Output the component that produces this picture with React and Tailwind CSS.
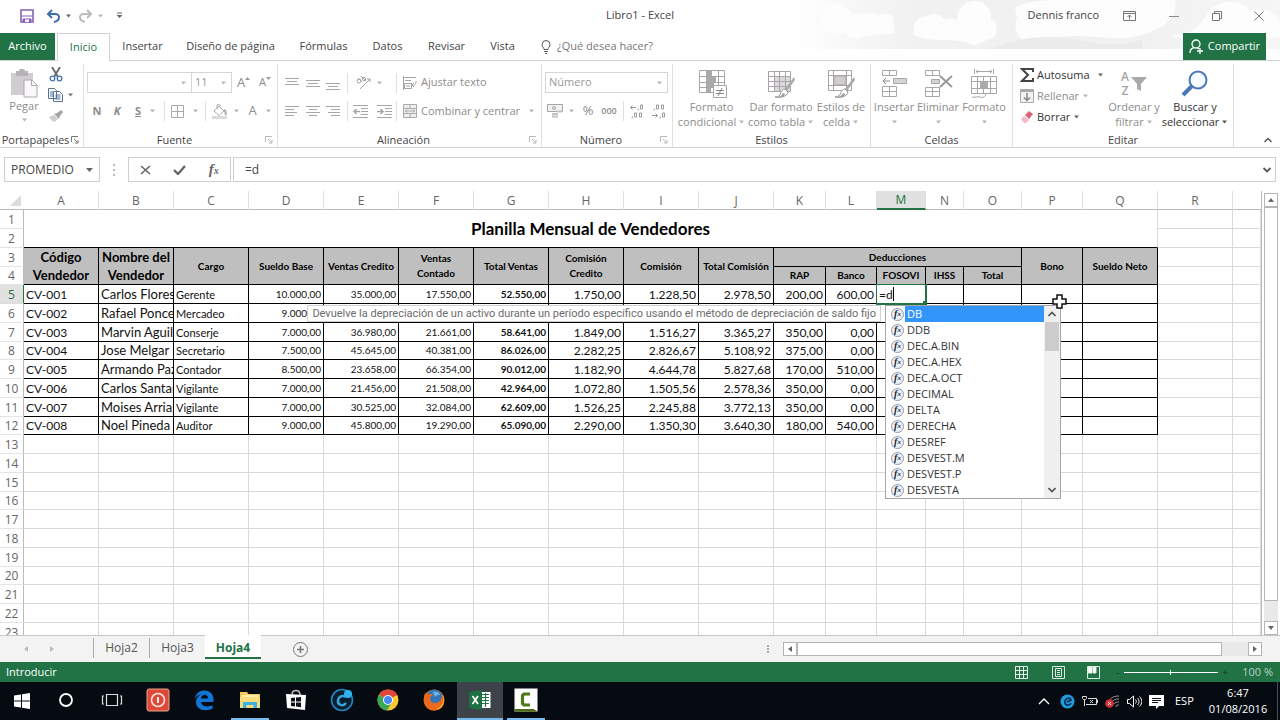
import { useState } from "react";

const COLUMNS = [
  { name: "A", width: "w-[75px]" },
  { name: "B", width: "w-[75px]" },
  { name: "C", width: "w-[75px]" },
  { name: "D", width: "w-[75px]" },
  { name: "E", width: "w-[75px]" },
  { name: "F", width: "w-[75px]" },
  { name: "G", width: "w-[75px]" },
  { name: "H", width: "w-[75px]" },
  { name: "I", width: "w-[75px]" },
  { name: "J", width: "w-[75px]" },
  { name: "K", width: "w-[52px]" },
  { name: "L", width: "w-[51px]" },
  { name: "M", width: "w-[49px]" },
  { name: "N", width: "w-[38px]" },
  { name: "O", width: "w-[58px]" },
  { name: "P", width: "w-[61px]" },
  { name: "Q", width: "w-[75px]" },
  { name: "R", width: "w-[75px]" },
];

const EMPLOYEES = [
  ["CV-001", "Carlos Flores", "Gerente", "10.000,00", "35.000,00", "17.550,00", "52.550,00", "1.750,00", "1.228,50", "2.978,50", "200,00", "600,00"],
  ["CV-002", "Rafael Ponce", "Mercadeo", "9.000,00", "", "", "", "", "", "", "", ""],
  ["CV-003", "Marvin Aguilar", "Conserje", "7.000,00", "36.980,00", "21.661,00", "58.641,00", "1.849,00", "1.516,27", "3.365,27", "350,00", "0,00"],
  ["CV-004", "Jose Melgar", "Secretario", "7.500,00", "45.645,00", "40.381,00", "86.026,00", "2.282,25", "2.826,67", "5.108,92", "375,00", "0,00"],
  ["CV-005", "Armando Paz", "Contador", "8.500,00", "23.658,00", "66.354,00", "90.012,00", "1.182,90", "4.644,78", "5.827,68", "170,00", "510,00"],
  ["CV-006", "Carlos Santana", "Vigilante", "7.000,00", "21.456,00", "21.508,00", "42.964,00", "1.072,80", "1.505,56", "2.578,36", "350,00", "0,00"],
  ["CV-007", "Moises Arriaga", "Vigilante", "7.000,00", "30.525,00", "32.084,00", "62.609,00", "1.526,25", "2.245,88", "3.772,13", "350,00", "0,00"],
  ["CV-008", "Noel Pineda", "Auditor", "9.000,00", "45.800,00", "19.290,00", "65.090,00", "2.290,00", "1.350,30", "3.640,30", "180,00", "540,00"],
];

const FUNCTIONS = [
  "DB", "DDB", "DEC.A.BIN", "DEC.A.HEX", "DEC.A.OCT", "DECIMAL",
  "DELTA", "DERECHA", "DESREF", "DESVEST.M", "DESVEST.P", "DESVESTA",
];

// Text style of each data column
const CELL_STYLES = [
  "pl-[2px] text-left text-[12px]",
  "pl-[2px] text-left text-[13px]",
  "pl-[2px] text-left text-[11px]",
  "pr-[2px] text-right text-[10px]",
  "pr-[2px] text-right text-[10px]",
  "pr-[2px] text-right text-[10px]",
  "pr-[2px] text-right text-[10px] font-bold",
  "pr-[2px] text-right text-[12px]",
  "pr-[2px] text-right text-[12px]",
  "pr-[2px] text-right text-[12px]",
  "pr-[2px] text-right text-[12px]",
  "pr-[2px] text-right text-[12px]",
];

/* ---------- small shared pieces ---------- */

function Caret({ className = "text-[#b5b5b5]" }) {
  return (
    <svg viewBox="0 0 7 4" className={`h-1 w-[7px] shrink-0 ${className}`} fill="currentColor">
      <path d="M1 0.5h5L3.5 3.5z" />
    </svg>
  );
}

function Launcher({ className = "text-[#b8b8b8]" }) {
  return (
    <svg viewBox="0 0 8 8" className={`h-2 w-2 ${className}`} fill="none" stroke="currentColor">
      <path d="M0.5 6V0.5H7M3 3l4 4M7 4v3H4" />
    </svg>
  );
}

function Group({ label, width, launcher, launcherColor, children }) {
  return (
    <section aria-label={label} className={`flex shrink-0 flex-col ${width}`}>
      <div className="flex min-h-0 flex-1 border-r border-[#e0e0e0]">{children}</div>
      <div className="flex h-[14px] items-center border-r border-[#e0e0e0] text-[#444]">
        <span className="flex-1 text-center leading-[14px]">{label}</span>
        {launcher && (
          <button type="button" aria-label={`Opciones de ${label}`} className="w-3">
            <Launcher className={launcherColor} />
          </button>
        )}
      </div>
    </section>
  );
}

function Divider() {
  return <span className="h-5 w-px shrink-0 bg-[#e0e0e0]" />;
}

function IconButton({ label, width = "w-5", className = "", children }) {
  return (
    <button type="button" aria-label={label} className={`flex h-5 shrink-0 items-center justify-center ${width} ${className}`}>
      {children}
    </button>
  );
}

function BigButton({ icon, lines, width, dark }) {
  return (
    <button type="button" className={`flex shrink-0 flex-col items-center ${width} ${dark ? "text-[#333]" : "text-[#8c8c8c]"}`}>
      <span className="flex h-[31px] items-center">{icon}</span>
      <span className="h-[15px] whitespace-nowrap leading-[15px]">{lines[0]}</span>
      <span className="flex h-[15px] items-center gap-[2px] whitespace-nowrap leading-[15px]">
        {lines[1]}
        <Caret className={dark ? "text-[#555]" : "text-[#b5b5b5]"} />
      </span>
    </button>
  );
}

function Lines({ rows }) {
  return (
    <svg viewBox="0 0 14 14" className="size-[14px]" stroke="#a8a8a8">
      {rows.map(([x1, x2, y]) => (
        <path key={y} d={`M${x1} ${y}H${x2}`} />
      ))}
    </svg>
  );
}

/* ---------- title bar and tabs ---------- */

function Clouds() {
  return (
    <svg viewBox="0 0 485 50" className="absolute right-0 top-0 h-[50px] w-[485px]" aria-hidden="true">
      <defs>
        <linearGradient id="sky" x1="0" x2="1" y1="0" y2="0">
          <stop offset="0" stopColor="#ffffff" />
          <stop offset="0.12" stopColor="#f7f7f7" />
          <stop offset="0.25" stopColor="#f1f1f1" />
          <stop offset="0.7" stopColor="#f1f1f1" />
          <stop offset="1" stopColor="#f6f6f6" />
        </linearGradient>
      </defs>
      <path d="M0 0H485V49H0z" fill="url(#sky)" />
      <g fill="#fdfdfd">
        <circle cx="41" cy="19" r="16" />
        <circle cx="61" cy="26" r="13" />
        <path d="M60 20c8-9 18-8 24-4 7-5 16-2 14 8 4 6 0 12-10 10-14 3-28 2-32-4z" />
        <path d="M119 35c-2-12 4-19 13-19 8-4 15-1 18 4 4-2 9-2 12 1 0-14 9-20 18-20s17 8 16 18c8 1 7 20-1 20-9 3-14 9-20 5-14-7-36 0-56-9z" />
        <path d="M220 8c10-7 28-8 50-8h110c4 16-10 30-38 36-18 5-38 0-60 0-20 0-36 5-52 5-12-6-10-18-8-24z" />
        <path d="M378 35c30 0 30-22 40-28 12-8 30-6 36 3 20-2 31 5 31 12v14c-30 8-80 10-107 0z" />
      </g>
      <path d="M195 49c34-13 58-15 92-8 22 5 42 4 60-1v9z" fill="#ebebeb" />
    </svg>
  );
}

function TitleBar() {
  return (
    <div className="relative flex h-[31px] items-center text-[11px] text-[#444]">
      <div className="flex flex-1 items-center">
        <button type="button" aria-label="Guardar" className="ml-5">
          <svg viewBox="0 0 14 14" className="size-[14px]">
            <path d="M1 1h12v12H1z" fill="#fff" stroke="#8560b5" strokeWidth="1.6" />
            <path d="M2 7h10M3 10h8v3H3z" fill="#8560b5" stroke="#8560b5" />
            <path d="M5 10.5h4V13H5z" fill="#fff" />
          </svg>
        </button>
        <button type="button" aria-label="Deshacer" className="ml-3 flex items-center gap-1">
          <svg viewBox="0 0 15 14" className="h-[14px] w-[15px]" fill="none" stroke="#3f6eae" strokeWidth="2">
            <path d="M6 1L2 5l4 4M2 5h7c6 0 5 7-1 8" />
          </svg>
          <Caret className="text-[#666]" />
        </button>
        <button type="button" aria-label="Rehacer" className="ml-[6px] flex items-center gap-1">
          <svg viewBox="0 0 15 14" className="h-[14px] w-[15px]" fill="none" stroke="#bbb" strokeWidth="2">
            <path d="M9 1l4 4-4 4M13 5H6c-6 0-5 7 1 8" />
          </svg>
          <Caret />
        </button>
        <button type="button" aria-label="Personalizar barra" className="ml-3">
          <svg viewBox="0 0 7 7" className="size-[7px]" fill="#666">
            <path d="M1 0.5h5v1H1zM0.500 3h6L3.500 6z" />
          </svg>
        </button>
      </div>
      <h1 className="text-center">Libro1 - Excel</h1>
      <div className="flex flex-1 items-center justify-end">
        <span className="mr-6">Dennis franco</span>
        <button type="button" aria-label="Opciones de presentación" className="mr-[33px]">
          <svg viewBox="0 0 13 10" className="h-[10px] w-[13px]" fill="none" stroke="#777">
            <path d="M0.500 0.500h12v9H0.500zM0.500 2.500h12M6.500 8.500V4M4.500 6l2-2 2 2" />
          </svg>
        </button>
        <button type="button" aria-label="Minimizar" className="mr-[33px]">
          <svg viewBox="0 0 10 10" className="size-[10px]" stroke="#888"><path d="M0 5.500h10" /></svg>
        </button>
        <button type="button" aria-label="Restaurar" className="mr-8">
          <svg viewBox="0 0 10 10" className="size-[10px]" fill="none" stroke="#777">
            <path d="M0.500 2.500h7v7h-7zM2.500 2.500v-2h7v7h-2" />
          </svg>
        </button>
        <button type="button" aria-label="Cerrar" className="mr-4">
          <svg viewBox="0 0 10 10" className="size-[10px]" stroke="#777"><path d="M0.500 0.500l9 9M9.500 0.500l-9 9" /></svg>
        </button>
      </div>
    </div>
  );
}

const TABS = [
  ["Insertar", "w-[65px]"],
  ["Diseño de página", "w-[111px]"],
  ["Fórmulas", "w-[75px]"],
  ["Datos", "w-[53px]"],
  ["Revisar", "w-[65px]"],
  ["Vista", "w-[47px]"],
];

function RibbonTabs() {
  return (
    <nav className="relative mt-[2px] flex h-7 border-b border-[#d2d2d2] text-[11px] text-[#444]">
      <button type="button" className="h-[27px] w-[55px] bg-[#217346] text-white">Archivo</button>
      <button type="button" className="-mb-px ml-[2px] h-7 w-[53px] border-x border-t border-[#d2d2d2] bg-white text-[#217346]">
        Inicio
      </button>
      {TABS.map(([name, width]) => (
        <button key={name} type="button" className={`h-[27px] whitespace-nowrap ${width}`}>
          {name}
        </button>
      ))}
      <button type="button" className="ml-[15px] flex items-center gap-[6px] whitespace-nowrap text-[#777]">
        <svg viewBox="0 0 10 14" className="h-[14px] w-[10px]" fill="none" stroke="#555">
          <path d="M3 9.500C3 7.500 1 7 1 4.500a4 4 0 0 1 8 0C9 7 7 7.500 7 9.500zM3 11.500h4M4 13.500h2" />
        </svg>
        ¿Qué desea hacer?
      </button>
      <button type="button" className="ml-auto mr-[14px] flex h-[27px] w-[83px] items-center justify-center gap-1 bg-[#217346] text-white">
        <svg viewBox="0 0 15 15" className="size-[15px]" fill="none" stroke="#fff" strokeWidth="1.3">
          <circle cx="7" cy="5" r="4" />
          <path d="M1 14c0-3 2-5 4.500-5.500M8 8.500l2 1.500M8 12h6M11 9v6" />
        </svg>
        Compartir
      </button>
    </nav>
  );
}

/* ---------- ribbon ---------- */

function Clipboard() {
  return (
    <Group label="Portapapeles" width="w-[84px]" launcher launcherColor="text-[#777]">
      <div className="flex w-12 flex-col items-center pt-1 text-[#8c8c8c]">
        <button type="button" className="flex flex-col items-center">
          <svg viewBox="0 0 28 30" className="h-[30px] w-7">
            <path d="M1 5h22v22H1z" fill="#cfcdcf" />
            <path d="M6 3h3c0-3 6-3 6 0h3v5H6z" fill="#b5b3b5" />
            <path d="M14 12h8l5 5v12H14z" fill="#fbf7fa" stroke="#aaa" />
            <path d="M21.500 12v5.500H27" fill="none" stroke="#aaa" />
          </svg>
          <span className="h-4 leading-4">Pegar</span>
          <span className="flex h-3 items-center"><Caret /></span>
        </button>
      </div>
      <div className="flex flex-col gap-px">
        <IconButton label="Cortar" width="w-4">
          <svg viewBox="0 0 14 15" className="h-[15px] w-[14px]" fill="none">
            <path d="M3 0l6 10M11 0L5 10" stroke="#666" strokeWidth="1.800" />
            <circle cx="3.500" cy="11.500" r="2.300" stroke="#4573b0" strokeWidth="1.300" />
            <circle cx="10.500" cy="11.500" r="2.300" stroke="#4573b0" strokeWidth="1.300" />
          </svg>
        </IconButton>
        <IconButton label="Copiar" width="w-[26px]" className="gap-1">
          <svg viewBox="0 0 15 14" className="h-[14px] w-[15px]" fill="#fff" stroke="#5b728f">
            <path d="M0.500 0.500h6l2 2v8h-8zM5.500 3.500h6l3 3v7h-9z" />
            <path d="M2 4h3M2 6h3M2 8h3M7.500 7h5M7.500 9h5M7.500 11h5" stroke="#4573b0" />
          </svg>
          <Caret className="text-[#777]" />
        </IconButton>
        <IconButton label="Copiar formato" width="w-4">
          <svg viewBox="0 0 14 12" className="h-3 w-[14px]">
            <path d="M0 7l5-2 4 4-4 3c-2-1-4-3-5-5z" fill="#d0ccd0" />
            <path d="M5 4l3-1 4-3 2 2-3 4-1 3z" fill="#a5a5a5" />
          </svg>
        </IconButton>
      </div>
    </Group>
  );
}

function SelectBox({ label, value, width }) {
  return (
    <div className={`flex h-[21px] items-center border border-[#d6d6d6] pr-1 ${width}`}>
      <select aria-label={label} defaultValue={value} className="min-w-0 flex-1 appearance-none pl-[3px] text-[#999] outline-none">
        <option>{value}</option>
      </select>
      <Caret />
    </div>
  );
}

function Font() {
  return (
    <Group label="Fuente" width="w-[194px]" launcher>
      <div className="flex flex-col gap-2 pl-[3px] pt-2 text-[#8c8c8c]">
        <div className="flex items-center">
          <SelectBox label="Fuente" value="" width="w-[105px]" />
          <SelectBox label="Tamaño de fuente" value="11" width="-ml-px w-[41px]" />
          <IconButton label="Aumentar tamaño" width="w-[23px]">
            <span className="text-[13px]">A</span>
            <svg viewBox="0 0 5 3" className="mb-2 h-[3px] w-[5px]" fill="#999"><path d="M0 3h5L2.500 0z" /></svg>
          </IconButton>
          <IconButton label="Disminuir tamaño" width="w-5">
            <span>A</span>
            <svg viewBox="0 0 5 3" className="mb-2 h-[3px] w-[5px]" fill="#999"><path d="M0 0h5L2.500 3z" /></svg>
          </IconButton>
        </div>
        <div className="flex items-center">
          <IconButton label="Negrita"><b>N</b></IconButton>
          <IconButton label="Cursiva"><b className="italic">K</b></IconButton>
          <IconButton label="Subrayado" width="w-[37px]" className="gap-2"><b className="underline">S</b><Caret /></IconButton>
          <Divider />
          <IconButton label="Bordes" width="w-10" className="gap-2">
            <svg viewBox="0 0 13 13" className="size-[13px]" fill="none" stroke="#aaa"><path d="M0.500 0.500h12v12H0.500zM6.500 0.500v12M0.500 6.500h12" /></svg>
            <Caret />
          </IconButton>
          <Divider />
          <IconButton label="Color de relleno" width="w-10" className="gap-[6px]">
            <svg viewBox="0 0 15 15" className="size-[15px]" fill="none" stroke="#aaa">
              <path d="M2 7l5-5 5 5-5 4.500zM5 5V1c1-1 3-1 3 1" />
              <path d="M12 6c2 1 2 3 1.500 5" strokeWidth="2" />
              <path d="M0 13.500h15" stroke="#ddd8dc" strokeWidth="3" />
            </svg>
            <Caret />
          </IconButton>
          <IconButton label="Color de fuente" width="w-7" className="gap-2"><span className="text-[13px]">A</span><Caret /></IconButton>
        </div>
      </div>
    </Group>
  );
}

function Alignment() {
  return (
    <Group label="Alineación" width="w-[264px]" launcher>
      <div className="flex flex-col gap-2 pl-1 pt-2 text-[#8c8c8c]">
        <div className="flex h-[21px] items-center">
          <IconButton label="Alinear arriba"><Lines rows={[[0, 14, 2.5], [2, 12, 5.5], [0, 14, 8.5]]} /></IconButton>
          <IconButton label="Alinear en medio" width="w-[21px]"><Lines rows={[[0, 14, 4.5], [2, 12, 7.5], [0, 14, 10.5]]} /></IconButton>
          <IconButton label="Alinear abajo"><Lines rows={[[0, 14, 7.5], [2, 12, 10.5], [0, 14, 13.5]]} /></IconButton>
          <span className="w-1" />
          <Divider />
          <IconButton label="Orientación" width="w-[41px]" className="gap-[5px]">
            <svg viewBox="0 0 16 15" className="h-[15px] w-4" fill="none" stroke="#a5a5a5">
              <path d="M5 14L15 4M12 4h3v3" />
              <circle cx="4" cy="6" r="2" />
              <path d="M3 3l4 4M6 1l5 5" />
              <circle cx="9" cy="4" r="1.700" />
            </svg>
            <Caret />
          </IconButton>
          <span className="w-[7px]" />
          <Divider />
          <button type="button" className="ml-[6px] flex items-center gap-1 whitespace-nowrap">
            <svg viewBox="0 0 14 15" className="h-[15px] w-[14px]" fill="none" stroke="#a5a5a5">
              <path d="M0.500 1v14M1 2.500h12M2 5.500h6M1.500 8.500h7v5h-7zM3 11h4M13 6c0 4-2 4-4 4M11 8l-2 2 2 2" />
            </svg>
            Ajustar texto
          </button>
        </div>
        <div className="flex items-center">
          <IconButton label="Alinear a la izquierda"><Lines rows={[[0, 14, 2.5], [0, 9, 5.5], [0, 12, 8.5], [0, 9, 11.5]]} /></IconButton>
          <IconButton label="Centrar" width="w-[21px]"><Lines rows={[[0, 14, 2.5], [3, 11, 5.5], [0, 14, 8.5], [3, 11, 11.5]]} /></IconButton>
          <IconButton label="Alinear a la derecha"><Lines rows={[[0, 14, 2.5], [5, 14, 5.5], [2, 14, 8.5], [5, 14, 11.5]]} /></IconButton>
          <span className="w-1" />
          <Divider />
          <IconButton label="Disminuir sangría" width="w-6">
            <svg viewBox="0 0 15 13" className="h-[13px] w-[15px]" stroke="#a5a5a5" fill="none">
              <path d="M0 0.500h15M8 3.500h7M8 6.500h7M8 9.500h7M0 12.500h15" /><path d="M7 6.500H1M3.500 4L1 6.500 3.500 9" strokeWidth="1.500" />
            </svg>
          </IconButton>
          <IconButton label="Aumentar sangría" width="w-6">
            <svg viewBox="0 0 15 13" className="h-[13px] w-[15px]" stroke="#a5a5a5" fill="none">
              <path d="M0 0.500h15M8 3.500h7M8 6.500h7M8 9.500h7M0 12.500h15" /><path d="M0 6.500h6M3.500 4L6 6.500 3.500 9" strokeWidth="1.500" />
            </svg>
          </IconButton>
          <Divider />
          <button type="button" className="ml-[6px] flex items-center gap-1 whitespace-nowrap">
            <svg viewBox="0 0 14 14" className="size-[14px]" fill="#eee" stroke="#aaa">
              <path d="M0.500 0.500h13v13H0.500zM0.500 4.500h13M0.500 9.500h13M7 0v4M7 10v4M2 7h10M4 5.500L2.500 7 4 8.500M10 5.500L11.500 7 10 8.500" />
            </svg>
            Combinar y centrar
            <span className="ml-1"><Caret /></span>
          </button>
        </div>
      </div>
    </Group>
  );
}

function NumberFormat() {
  return (
    <Group label="Número" width="w-[131px]" launcher>
      <div className="flex flex-col gap-2 pl-[3px] pt-2 text-[#8c8c8c]">
        <SelectBox label="Formato de número" value="Número" width="w-[123px]" />
        <div className="flex items-center">
          <IconButton label="Formato de contabilidad" width="w-[32px]" className="gap-[5px]">
            <svg viewBox="0 0 16 14" className="h-[14px] w-4" fill="#f3f0f3" stroke="#a5a5a5">
              <path d="M0.500 0.500h15v7H0.500z" /><circle cx="7" cy="4" r="1.500" />
              <path d="M5 10h6M5 12.500h6M10 7.500h5" stroke="#c5c0c5" strokeWidth="2" />
            </svg>
            <Caret />
          </IconButton>
          <IconButton label="Estilo porcentual" width="w-[22px]"><span className="text-[13px]">%</span></IconButton>
          <IconButton label="Estilo millares" width="w-5"><span className="text-[9px] font-semibold">000</span></IconButton>
          <span className="w-1" />
          <Divider />
          <IconButton label="Aumentar decimales" width="w-6">
            <svg viewBox="0 0 15 15" className="size-[15px]" fill="none" stroke="#999">
              <path d="M7 3.500H1.500M3.500 1.500l-2 2 2 2M9.500 4.500L9 6.500M11.500 1h2v4h-2zM3.500 12.500L3 14.500M5.500 9h2v4h-2zM10.500 9h2v4h-2z" />
            </svg>
          </IconButton>
          <IconButton label="Disminuir decimales" width="w-5">
            <svg viewBox="0 0 15 15" className="size-[15px]" fill="none" stroke="#999">
              <path d="M3.500 4.500L3 6.500M5.500 1h2v4h-2zM10.500 1h2v4h-2zM1 11.500h5.500M4.500 9.500l2 2-2 2M9.500 12.500L9 14.500M11.500 9h2v4h-2z" />
            </svg>
          </IconButton>
        </div>
      </div>
    </Group>
  );
}

function TableGlyph({ children }) {
  return (
    <svg viewBox="0 0 30 30" className="h-[30px] w-[30px]" fill="none" stroke="#a9a5a9">
      {children}
    </svg>
  );
}

function Brush() {
  return (
    <>
      <path d="M28 8L19 20l2 2 8-11z" fill="#aaa" stroke="none" />
      <path d="M19 20c-3 0-4 3-5 6-1 1-3 2-5 2 5 1 12 0 13-5z" fill="#fff" stroke="#999" />
      <path d="M17 24c-1 3-4 4-6 4 4 1 8-1 8-3z" fill="#999" stroke="none" />
    </>
  );
}

function Styles() {
  return (
    <Group label="Estilos" width="w-[198px]">
      <div className="flex pt-1">
        <BigButton
          width="w-[77px]"
          lines={["Formato", "condicional"]}
          icon={
            <TableGlyph>
              <path d="M2.500 1.500h25v22h-25zM2.500 7.500h25M2.500 13.500h25M2.500 18.500h25M9.500 1.500v22M21.500 1.500v22" />
              <path d="M10 2h5v5h-5zM10 8h9v5h-9zM10 14h7v4h-7zM10 19h4v4h-4z" fill="#aaa" stroke="none" />
              <path d="M16.500 16.500h13v12h-13z" fill="#fff" />
              <path d="M19 21.500h8M19 24.500h8M25 19l-4 8" stroke="#888" />
            </TableGlyph>
          }
        />
        <BigButton
          width="w-[62px]"
          lines={["Dar formato", "como tabla"]}
          icon={
            <TableGlyph>
              <path d="M8 8h16v14H8z" fill="#ddd8dd" stroke="none" />
              <path d="M2.500 2.500h22v20h-22zM2.500 7.500h22M2.500 12.500h22M2.500 17.500h22M8.500 2.500v20M13.500 2.500v20M19.500 2.500v20" />
              <Brush />
            </TableGlyph>
          }
        />
        <BigButton
          width="w-[58px]"
          lines={["Estilos de", "celda"]}
          icon={
            <TableGlyph>
              <path d="M2.500 1.500h23v20h-23zM2.500 6.500h23M2.500 16.500h23M7.500 1.500v20M20.500 1.500v20" />
              <path d="M8 7h12v9H8z" fill="#d0ccd0" />
              <Brush />
            </TableGlyph>
          }
        />
      </div>
    </Group>
  );
}

function Cells() {
  return (
    <Group label="Celdas" width="w-[142px]">
      <div className="flex pl-px pt-1">
        <BigButton
          width="w-[44px]"
          lines={["Insertar", ""]}
          icon={
            <TableGlyph>
              <path d="M3.500 1.500h14v5h-14zM10.500 1.500v5M3.500 17.500h14v10h-14zM3.500 22.500h14M10.500 17.500v10" />
              <path d="M14.500 9.500h13v5h-13z" fill="#d5d2d5" />
              <path d="M11 12H4M7 9l-3 3 3 3" stroke="#888" />
            </TableGlyph>
          }
        />
        <BigButton
          width="w-[44px]"
          lines={["Eliminar", ""]}
          icon={
            <TableGlyph>
              <path d="M2.500 1.500h14v5h-14zM9.500 1.500v5M2.500 18.500h14v9h-14zM2.500 22.500h14M9.500 18.500v9" />
              <path d="M8.500 10.500h8v4h-8z" fill="#d5d2d5" />
              <path d="M17 7l12 11M29 7L17 18" stroke="#999" strokeWidth="2" />
            </TableGlyph>
          }
        />
        <BigButton
          width="w-[48px]"
          lines={["Formato", ""]}
          icon={
            <TableGlyph>
              <path d="M5.500 0v5M24.500 0v5M7 2.500h16M9 1L7 2.500 9 4M21 1l2 1.500L21 4" />
              <path d="M2.500 7.500h25v17h-25zM2.500 12.500h25M2.500 19.500h25M8.500 7.500v17M14.500 7.500v17M21.500 7.500v17M3 28c4 1 5-1 8 0s5 0 6-3" />
              <path d="M11 12h8v8h-8z" fill="#aaa" stroke="none" />
            </TableGlyph>
          }
        />
      </div>
    </Group>
  );
}

function Editing() {
  return (
    <Group label="Editar" width="w-[221px]">
      <div className="flex w-[91px] flex-col gap-px pl-[7px] pt-px text-[#333]">
        <button type="button" className="flex h-5 items-center gap-[3px]">
          <svg viewBox="0 0 14 14" className="size-[14px]" fill="none" stroke="#444" strokeWidth="2">
            <path d="M13 4V1H2l6 6-6 6h11v-3" />
          </svg>
          Autosuma
          <span className="ml-auto"><Caret className="text-[#666]" /></span>
        </button>
        <button type="button" className="flex h-5 items-center gap-[3px] text-[#8c8c8c]">
          <svg viewBox="0 0 14 14" className="size-[14px]" fill="#f3f0f3" stroke="#aaa">
            <path d="M0.500 0.500h13v13H0.500z" /><path d="M1 2h12" strokeWidth="2" /><path d="M7 4v7M4 8.500L7 11.500l3-3" stroke="#888" strokeWidth="1.500" />
          </svg>
          Rellenar <Caret />
        </button>
        <button type="button" className="flex h-5 items-center gap-[3px]">
          <svg viewBox="0 0 14 14" className="size-[14px]">
            <path d="M1 9l3-3 5 4-3 3H4z" fill="#f7b9c4" /><path d="M5 5l4-4 4 3-4 5z" fill="#e0637c" />
          </svg>
          Borrar <Caret className="text-[#666]" />
        </button>
      </div>
      <div className="flex pt-1">
        <BigButton
          width="w-[60px]"
          lines={["Ordenar y", "filtrar"]}
          icon={
            <span className="flex items-center">
              <span className="flex flex-col text-[12px] font-semibold leading-[14px] text-[#a5a5a5]"><span>A</span><span>Z</span></span>
              <svg viewBox="0 0 16 16" className="ml-[2px] size-4" fill="#aaa"><path d="M0 1h16l-6 7v7l-4-2V8z" /></svg>
            </span>
          }
        />
        <BigButton
          dark
          width="w-[62px]"
          lines={["Buscar y", "seleccionar"]}
          icon={
            <svg viewBox="0 0 28 28" className="size-7" fill="none" stroke="#4878b8">
              <circle cx="17" cy="10" r="8.500" strokeWidth="2" fill="#f7faff" />
              <path d="M11 16L2 25" strokeWidth="4" />
            </svg>
          }
        />
      </div>
    </Group>
  );
}

function Ribbon() {
  return (
    <div className="flex h-[87px] border-b border-[#d2d2d2] pt-[3px] text-[11px]">
      <Clipboard />
      <Font />
      <Alignment />
      <NumberFormat />
      <Styles />
      <Cells />
      <Editing />
      <button type="button" aria-label="Contraer la cinta" className="ml-auto mr-2 self-end pb-1">
        <svg viewBox="0 0 8 6" className="h-[6px] w-2" fill="none" stroke="#555" strokeWidth="1.500"><path d="M0.500 5L4 1.500 7.500 5" /></svg>
      </button>
    </div>
  );
}

/* ---------- formula bar ---------- */

function FormulaBar({ value, onChange }) {
  return (
    <div className="flex h-[43px] items-center pl-1 pr-1 text-[12px] text-[#444]">
      <div className="flex h-[25px] w-24 items-center border border-[#cfcfcf] pr-[6px]">
        <input aria-label="Cuadro de nombres" defaultValue="PROMEDIO" className="min-w-0 flex-1 pl-[6px] outline-none" />
        <svg viewBox="0 0 7 4" className="h-1 w-[7px]" fill="#666"><path d="M0 0h7L3.500 4z" /></svg>
      </div>
      <svg viewBox="0 0 2 12" className="mx-[13px] h-3 w-[2px]" fill="#bbb"><path d="M0 0h2v2H0zM0 5h2v2H0zM0 10h2v2H0z" /></svg>
      <div className="flex h-[25px] w-[103px] items-center justify-around border border-[#cfcfcf]">
        <button type="button" aria-label="Cancelar">
          <svg viewBox="0 0 11 10" className="h-[10px] w-[11px]" stroke="#666" strokeWidth="1.600"><path d="M1 1l9 8M10 1L1 9" /></svg>
        </button>
        <button type="button" aria-label="Introducir">
          <svg viewBox="0 0 13 10" className="h-[10px] w-[13px]" fill="none" stroke="#666" strokeWidth="2.400"><path d="M1 5l4 4 7-8" /></svg>
        </button>
        <button type="button" aria-label="Insertar función" className="font-['Liberation_Serif',serif] text-[15px] font-bold italic leading-4 text-[#666]">
          f<span className="text-[10px]">x</span>
        </button>
      </div>
      <div className="ml-[2px] flex h-[25px] flex-1 items-center border border-[#cfcfcf] pr-1">
        <input aria-label="Barra de fórmulas" value={value} onChange={onChange} className="min-w-0 flex-1 pl-[11px] outline-none" />
        <svg viewBox="0 0 8 6" className="h-[6px] w-2" fill="none" stroke="#555" strokeWidth="1.800"><path d="M0.500 1L4 4.500 7.500 1" /></svg>
      </div>
    </div>
  );
}

/* ---------- sheet ---------- */

function FunctionIcon() {
  return (
    <span className="flex size-[13px] items-center justify-center rounded-full border border-[#8d96ab] bg-[#eef1f8] font-['Liberation_Serif',serif] text-[10px] font-bold italic leading-none text-[#223]">
      f<span className="text-[7px]">x</span>
    </span>
  );
}

function Autocomplete() {
  const [selected, setSelected] = useState("DB");

  return (
    <div className="font-['Open_Sans',sans-serif] text-[11px]">
      <div
        role="tooltip"
        className="absolute right-[44px] top-[20px] z-10 h-[17px] whitespace-nowrap border border-[#d0d0d0] bg-white px-1 font-['Roboto',sans-serif] leading-[15px] text-[#6b6b6b]"
      >
        Devuelve la depreciación de un activo durante un período específico usando el método de depreciación de saldo fijo
      </div>
      <div className="absolute left-[8px] top-[20px] z-20 flex w-[176px] border border-[#a5a5a5] bg-white text-[#333]">
        <ul role="listbox" aria-label="Funciones" className="flex-1">
          {FUNCTIONS.map((name) => (
            <li
              key={name}
              role="option"
              aria-selected={name === selected}
              onClick={() => setSelected(name)}
              className="flex h-4 items-center pl-[5px] leading-4"
            >
              <FunctionIcon />
              <span className={name === selected ? "ml-px flex-1 bg-[#3295fb] pl-[2px] text-left text-white" : "ml-px flex-1 pl-[2px] text-left"}>
                {name}
              </span>
            </li>
          ))}
        </ul>
        <div className="flex w-4 flex-col items-center bg-[#f0f0f0]">
          <svg viewBox="0 0 8 6" className="my-[5px] h-[6px] w-2" fill="none" stroke="#555" strokeWidth="1.600"><path d="M0.500 5L4 1.500 7.500 5" /></svg>
          <span className="h-[29px] w-[14px] bg-[#cdcdcd]" />
          <svg viewBox="0 0 8 6" className="mb-[5px] mt-auto h-[6px] w-2" fill="none" stroke="#555" strokeWidth="1.600"><path d="M0.500 1L4 4.500 7.500 1" /></svg>
        </div>
      </div>
    </div>
  );
}

function MouseCursor() {
  return (
    <svg viewBox="0 0 15 15" className="absolute left-[30px] top-[9px] z-30 size-[15px]" fill="#fff" stroke="#111" strokeWidth="1.500">
      <path d="M5 1h5v4h4v5h-4v4H5v-4H1V5h4z" />
    </svg>
  );
}

// Row heights alternate so that four rows always take 75px
const rowHeight = (n) => (n % 4 === 0 ? "h-[18px]" : "h-[19px]");

function RowNumber({ n, active }) {
  return (
    <th
      scope="row"
      className={
        active
          ? "border-b border-r border-b-[#ddd] border-r-[#217346] bg-[#e1e1e1] text-center font-['Open_Sans',sans-serif] text-[12px] font-normal leading-[17px] text-[#217346]"
          : "border-b border-r border-b-[#e4e4e4] border-r-[#bbb] text-center font-['Open_Sans',sans-serif] text-[12px] font-normal leading-[17px] text-[#666]"
      }
    >
      {n}
    </th>
  );
}

function Blank({ count }) {
  return Array.from({ length: count }, (_, i) => <td key={i} className="border-b border-r border-[#d9d9d9]" />);
}

const headCell = "border-b border-r border-black bg-[#bfbfbf] font-bold text-black";

function Sheet({ formula, onFormulaChange }) {
  return (
    <table className="w-full table-fixed border-separate border-spacing-0 font-['Lato',sans-serif] leading-[17px] text-[#111]">
      <colgroup>
        <col className="w-6" />
        {COLUMNS.map((col) => <col key={col.name} className={col.width} />)}
        <col />
      </colgroup>
      <thead className="font-['Open_Sans',sans-serif]">
        <tr className="h-[19px] text-[12px] text-[#666]">
          <th className="border-b border-[#bbb]">
            <svg viewBox="0 0 11 11" className="ml-auto mr-[3px] size-[11px]" fill="#dcdcdc"><path d="M11 0v11H0z" /></svg>
          </th>
          {COLUMNS.map((col) => (
            <th
              key={col.name}
              scope="col"
              className={
                col.name === "M"
                  ? "border-b-2 border-r border-b-[#217346] border-r-[#ddd] bg-[#e1e1e1] font-normal leading-4 text-[#217346]"
                  : "border-b border-r border-b-[#bbb] border-r-[#e0e0e0] font-normal"
              }
            >
              {col.name}
            </th>
          ))}
          <th className="border-b border-[#bbb]" />
        </tr>
      </thead>
      <tbody>
        <tr className="h-[19px]">
          <RowNumber n={1} />
          <td colSpan={17} rowSpan={2} className="border-b border-r border-b-black border-r-[#d9d9d9] text-center text-[17px] font-bold text-black">
            Planilla Mensual de Vendedores
          </td>
          <Blank count={2} />
        </tr>
        <tr className="h-[19px]">
          <RowNumber n={2} />
          <Blank count={2} />
        </tr>
        <tr className="h-[19px] text-[10px] leading-[15px]">
          <RowNumber n={3} />
          <th rowSpan={2} className={`${headCell} text-[13px] leading-[18px]`}>Código Vendedor</th>
          <th rowSpan={2} className={`${headCell} text-[13px] leading-[18px]`}>Nombre del Vendedor</th>
          <th rowSpan={2} className={headCell}>Cargo</th>
          <th rowSpan={2} className={headCell}>Sueldo Base</th>
          <th rowSpan={2} className={headCell}>Ventas Credito</th>
          <th rowSpan={2} className={headCell}>Ventas<br />Contado</th>
          <th rowSpan={2} className={headCell}>Total Ventas</th>
          <th rowSpan={2} className={headCell}>Comisión<br />Credito</th>
          <th rowSpan={2} className={headCell}>Comisión</th>
          <th rowSpan={2} className={`${headCell} whitespace-nowrap`}>Total Comisión</th>
          <th colSpan={5} className={headCell}>Deducciones</th>
          <th rowSpan={2} className={headCell}>Bono</th>
          <th rowSpan={2} className={headCell}>Sueldo Neto</th>
          <Blank count={2} />
        </tr>
        <tr className="h-[18px] text-[10px] leading-[15px]">
          <RowNumber n={4} />
          <th className={headCell}>RAP</th>
          <th className={headCell}>Banco</th>
          <th className={headCell}>FOSOVI</th>
          <th className={headCell}>IHSS</th>
          <th className={headCell}>Total</th>
          <Blank count={2} />
        </tr>
        {EMPLOYEES.map((employee, r) => (
          <tr key={employee[0]} className={rowHeight(r + 5)}>
            <RowNumber n={r + 5} active={r === 0} />
            {employee.map((value, c) => (
              <td key={c} className={`overflow-hidden whitespace-nowrap border-b border-r border-black ${CELL_STYLES[c]}`}>
                {value}
              </td>
            ))}
            {r === 0 ? (
              <td className="relative border-b border-r border-[#217346] p-0 text-[12px] outline outline-[#217346]">
                <input
                  aria-label="Celda M5"
                  value={formula}
                  onChange={onFormulaChange}
                  className="block h-[17px] w-full pl-[2px] outline-none"
                />
                <span className="absolute left-4 top-[2px] h-[14px] w-px bg-black" />
                <span className="absolute -bottom-[2px] -right-[2px] size-1 bg-[#217346]" />
                <Autocomplete />
              </td>
            ) : (
              <td className="border-b border-r border-black" />
            )}
            <td className="border-b border-r border-black" />
            <td className="border-b border-r border-black" />
            <td className="relative border-b border-r border-black">{r === 0 && <MouseCursor />}</td>
            <td className="border-b border-r border-black" />
            <Blank count={2} />
          </tr>
        ))}
        {Array.from({ length: 11 }, (_, i) => i + 13).map((n) => (
          <tr key={n} className={rowHeight(n)}>
            <RowNumber n={n} />
            <Blank count={19} />
          </tr>
        ))}
      </tbody>
    </table>
  );
}

function ScrollButton({ label, path }) {
  return (
    <button type="button" aria-label={label} className="flex size-[14px] shrink-0 items-center justify-center border border-[#b5b5b5] bg-white">
      <svg viewBox="0 0 8 8" className="size-2" fill="#666"><path d={path} /></svg>
    </button>
  );
}

function SheetTabs() {
  const [active, setActive] = useState("Hoja4");

  return (
    <div className="flex h-[27px] shrink-0 border-t border-[#c6c6c6] bg-[#f3f3f3] text-[12px] text-[#555]">
      <div className="flex w-[93px] items-center pl-6">
        <button type="button" aria-label="Hoja anterior" className="w-[26px]">
          <svg viewBox="0 0 4 6" className="h-[6px] w-1" fill="#bbb"><path d="M4 0v6L0 3z" /></svg>
        </button>
        <button type="button" aria-label="Hoja siguiente">
          <svg viewBox="0 0 4 6" className="h-[6px] w-1" fill="#bbb"><path d="M0 0v6l4-3z" /></svg>
        </button>
      </div>
      {["Hoja2", "Hoja3", "Hoja4"].map((name) => (
        <button
          key={name}
          type="button"
          onClick={() => setActive(name)}
          className={
            name === active
              ? "-mt-px h-6 w-14 border-b-2 border-[#217346] bg-white pt-1 font-bold text-[#217346]"
              : "mt-[2px] h-5 w-14 border-l border-[#aaa]"
          }
        >
          {name}
        </button>
      ))}
      <button type="button" aria-label="Hoja nueva" className="ml-8">
        <svg viewBox="0 0 15 15" className="size-[15px]" fill="none" stroke="#777">
          <circle cx="7.500" cy="7.500" r="7" /><path d="M4 7.500h7M7.500 4v7" strokeWidth="1.600" />
        </svg>
      </button>
      <div className="ml-auto flex w-[513px] items-center">
        <svg viewBox="0 0 2 8" className="mr-[14px] h-2 w-[2px]" fill="#aaa"><path d="M0 0h2v2H0zM0 3h2v2H0zM0 6h2v2H0z" /></svg>
        <ScrollButton label="Desplazar a la izquierda" path="M6 1v6L2 4z" />
        <div className="flex flex-1 bg-[#e9e9e9] pr-[26px]">
          <span className="h-[14px] flex-1 border border-[#b5b5b5] bg-white" />
        </div>
        <ScrollButton label="Desplazar a la derecha" path="M2 1v6l4-3z" />
        <span className="w-[18px]" />
      </div>
    </div>
  );
}

function StatusBar() {
  return (
    <footer className="flex h-5 shrink-0 items-center bg-[#217346] pl-[6px] pr-[7px] text-[11px] text-white">
      <span className="mr-auto">Introducir</span>
      <button type="button" aria-label="Normal" className="mr-6">
        <svg viewBox="0 0 13 13" className="size-[13px]" fill="none" stroke="#e6efe9"><path d="M0.500 0.500h12v12H0.500zM4.500 0.500v12M8.500 0.500v12M0.500 4.500h12M0.500 8.500h12" /></svg>
      </button>
      <button type="button" aria-label="Diseño de página" className="mr-[22px]">
        <svg viewBox="0 0 13 13" className="size-[13px]" fill="none" stroke="#dce8e0"><path d="M0.500 0.500h12v12H0.500zM3.500 2.500h6v8h-6zM5 4.500h3M5 6.500h3M5 8.500h3" /></svg>
      </button>
      <button type="button" aria-label="Salto de página" className="mr-4">
        <svg viewBox="0 0 13 13" className="size-[13px]" fill="none" stroke="#dce8e0"><path d="M0.500 0.500h12v12H0.500z" /><path d="M1 1h4v6H1zM6 1h3v6H6z" fill="#fff" /></svg>
      </button>
      <span className="mr-1 w-1 text-[#103c23]">-</span>
      <input
        type="range"
        aria-label="Zoom"
        defaultValue="50"
        className="h-px w-[94px] appearance-none bg-white [&::-webkit-slider-thumb]:h-[5px] [&::-webkit-slider-thumb]:w-px [&::-webkit-slider-thumb]:appearance-none [&::-webkit-slider-thumb]:bg-white"
      />
      <span className="ml-1 text-[#103c23]">+</span>
      <span className="ml-[14px] text-[#b8d0c1]">100 %</span>
    </footer>
  );
}

/* ---------- windows taskbar ---------- */

const TASKS = [
  {
    name: "Cortana",
    icon: <circle cx="12" cy="12" r="6" fill="none" stroke="#fff" strokeWidth="1.800" />,
  },
  {
    name: "Vista de tareas",
    icon: <path d="M6.500 6.500h11v11h-11zM4 8H2.500v8H4M20 8h1.500v8H20" fill="none" stroke="#ddd" strokeWidth="1.200" />,
  },
  {
    name: "Apagar",
    icon: (
      <>
        <rect x="1" y="1" width="22" height="22" rx="2" fill="#dd4b38" stroke="#e9a293" />
        <circle cx="12" cy="12" r="6.500" fill="none" stroke="#fbe6df" strokeWidth="1.600" />
        <path d="M12 9v6" stroke="#fff" strokeWidth="1.800" />
      </>
    ),
  },
  {
    name: "Edge",
    icon: (
      <path
        d="M2.500 11C4 5 8 2.500 12.500 2.500c6 0 9 4.500 9 9V14H9c.5 5 7.500 5.500 11.500 3v3.800C12 24 4 21.500 4 14c0-3.500 2-6 5-7.500-3 .5-5 2-6.500 4.500zM9 10.500h7c0-5-6.500-5-7 0z"
        fill="#0f76d6"
      />
    ),
  },
  {
    name: "Explorador de archivos",
    open: true,
    icon: (
      <>
        <path d="M2 4h7l1.500 2H22v14H2z" fill="#f4c95b" />
        <path d="M4 7h16v3H4z" fill="#fdeeb5" />
        <path d="M2 9h20v11H2z" fill="#fbdc7b" />
        <path d="M5 20v-6h14v6h-3.500v-3h-7v3z" fill="#3bb2e6" />
      </>
    ),
  },
  {
    name: "Tienda",
    icon: (
      <>
        <path d="M8 7c0-6 8-6 8 0" fill="none" stroke="#bbb" strokeWidth="1.500" />
        <path d="M2 6l20 1-1 15-18-2z" fill="#fff" />
        <path d="M7 10l4-.4v4H7zM12 9.500l5-.5v4.600h-5zM7 14.500h4v4l-4-.5zM12 14.500h5v4.800l-5-.7z" fill="#0a1118" />
      </>
    ),
  },
  {
    name: "aTube Catcher",
    icon: (
      <>
        <circle cx="12" cy="12" r="10.500" fill="#07202f" stroke="#2584bd" strokeWidth="1.600" />
        <path d="M16 15c-3 4-9 2-8-3 1-4 5-5 8-3" fill="none" stroke="#3f9fd8" strokeWidth="2.500" />
        <circle cx="18" cy="6" r="4" fill="#2fb4ef" />
      </>
    ),
  },
  {
    name: "Chrome",
    icon: (
      <>
        <circle cx="12" cy="12" r="10.500" fill="#fbc832" />
        <path d="M12 12L2.900 6.700A10.500 10.500 0 0 1 21.100 6.700z" fill="#e2463a" />
        <path d="M12 12L2.900 6.700A10.500 10.500 0 0 0 11 22.450L16 14z" fill="#3aa757" />
        <path d="M12 7h9.200" stroke="#e2463a" strokeWidth="1" />
        <circle cx="12" cy="12" r="5" fill="#fff" />
        <circle cx="12" cy="12" r="4" fill="#4a8af4" />
      </>
    ),
  },
  {
    name: "Firefox",
    icon: (
      <>
        <circle cx="12" cy="12" r="10.500" fill="#e8701c" />
        <circle cx="12.500" cy="9.500" r="8" fill="#3575b8" />
        <path d="M11 4c3-1 6 0 7 3-2 0-4 0-5 2z" fill="#6fb6de" />
        <path d="M3 5c1 1 2 1.500 3 1.500 2-1 4-.5 5 .5-1 1-3 1.500-3 3 0 3 2 5 5 5 4 0 7-3 7-8 4 7 1 15.500-7.500 15.500C4 22.500 0 15 3 5z" fill="#ec6a1c" />
        <path d="M20 6c3 6 1 13-6 15.500 8 0 10-10 6-15.500z" fill="#fbc23a" />
      </>
    ),
  },
  {
    name: "Excel",
    open: true,
    active: true,
    icon: (
      <>
        <path d="M12 4h10.500v16H12z" fill="#fff" />
        <path d="M14 6.500h7M14 9.500h7M14 12.500h7M14 15.500h7M17.500 5v14" stroke="#217346" strokeWidth="1.200" />
        <path d="M1 4l13-2v20L1 20z" fill="#1e7145" />
        <path d="M4.500 8l5.500 8M10 8l-5.500 8" stroke="#fff" strokeWidth="1.800" />
      </>
    ),
  },
  {
    name: "Camtasia",
    open: true,
    icon: (
      <>
        <path d="M0.500 0.500h23v23h-23z" fill="#fff" />
        <path d="M0.500 21h19l4 2.500h-23z" fill="#4c6b12" />
        <path d="M16 6H10l-1.500 1.500v8L10 17h6" fill="none" stroke="#4b7a16" strokeWidth="3.200" />
      </>
    ),
  },
];

function Taskbar() {
  return (
    <div className="flex h-[38px] shrink-0 bg-[#060b12] text-[11px] text-white">
      <button type="button" aria-label="Inicio" className="flex w-[43px] items-center justify-center">
        <svg viewBox="0 0 16 16" className="size-4" fill="#fff"><path d="M0 2.500l7-1v6H0zM8 1.300L16 0v7.500H8zM0 8.500h7v6l-7-1zM8 8.500h8V16l-8-1.300z" /></svg>
      </button>
      {TASKS.map((task) => (
        <button
          key={task.name}
          type="button"
          aria-label={task.name}
          className={`flex w-[46px] flex-col items-center ${task.active ? "bg-[#3d4349]" : ""}`}
        >
          <span className="flex flex-1 items-center">
            <svg viewBox="0 0 24 24" className="size-6">{task.icon}</svg>
          </span>
          <span className={task.active ? "h-[2px] w-full bg-[#76b9ed]" : task.open ? "h-[2px] w-[38px] bg-[#76b9ed]" : "h-[2px]"} />
        </button>
      ))}
      <div className="ml-auto flex items-center">
        <button type="button" aria-label="Iconos ocultos" className="mr-[10px]">
          <svg viewBox="0 0 12 8" className="h-2 w-3" fill="none" stroke="#fff" strokeWidth="1.300"><path d="M1 7l5-5 5 5" /></svg>
        </button>
        <svg viewBox="0 0 15 15" className="mr-[7px] size-[15px]">
          <circle cx="7.500" cy="7.500" r="7" fill="#1f9be0" /><path d="M11 9c-2 4-7 2-6-2 1-3 5-4 6-1L7 8" fill="none" stroke="#0a2c49" strokeWidth="1.600" />
        </svg>
        <svg viewBox="0 0 16 12" className="mr-[7px] h-3 w-4" fill="none" stroke="#ddd">
          <path d="M6 3.500h8.500v6H4M14.500 5h1v3M0.500 1.500h4v2l-1 1h-2l-1-1zM2.500 5v6M8 5l3 3M11 5L8 8" />
        </svg>
        <svg viewBox="0 0 15 13" className="mr-[7px] h-[13px] w-[15px]" fill="none" stroke="#999">
          <path d="M4 6c2-4 6-5 10-5M6 8c2-3 4-4 8-4M9 9c1-2 3-2 5-2M11 12c0-2 1-2 3-2" />
          <circle cx="4.500" cy="8.500" r="4.300" fill="#d8303a" stroke="none" /><path d="M3 7l3 3M6 7l-3 3" stroke="#fff" />
        </svg>
        <svg viewBox="0 0 15 13" className="mr-[7px] h-[13px] w-[15px]" fill="none" stroke="#fff">
          <path d="M0.500 4.500h2L6.500 1v11L2.500 8.500h-2zM8.500 4.500c1 1 1 3 0 4M10.500 3c2 2 2 5 0 7M12.500 1.500c3 3 3 7 0 10" />
        </svg>
        <svg viewBox="0 0 15 15" className="mr-[11px] size-[15px]"><path d="M0 1h15v11h-5l-3 3v-3H0z" fill="#fff" /><path d="M3 4.500h9M3 6.500h9M3 8.500h6" stroke="#0a1118" /></svg>
        <button type="button" className="w-[18px] text-[11px]">ESP</button>
        <time dateTime="2016-08-01T06:47" className="ml-[14px] w-[62px] text-center leading-4">
          6:47<br />01/08/2016
        </time>
        <span className="ml-2 h-[38px] w-px bg-[#4a4f55]" />
        <span className="w-[2px]" />
      </div>
    </div>
  );
}

function App() {
  const [formula, setFormula] = useState("=d");
  const handleFormula = (e) => setFormula(e.target.value);

  return (
    <div className="flex h-screen flex-col overflow-hidden bg-white font-['Open_Sans',sans-serif]">
      <header className="relative shrink-0">
        <Clouds />
        <TitleBar />
        <RibbonTabs />
      </header>
      <Ribbon />
      <FormulaBar value={formula} onChange={handleFormula} />
      <main className="flex min-h-0 flex-1">
        <div className="min-w-0 flex-1 overflow-hidden border-r border-[#bbb]">
          <Sheet formula={formula} onFormulaChange={handleFormula} />
        </div>
        <div className="flex w-[18px] flex-col items-center pt-[2px]">
          <ScrollButton label="Desplazar hacia arriba" path="M1 6h6L4 2z" />
          <div className="flex w-[14px] flex-1 flex-col bg-[#e9e9e9] pb-5">
            <span className="flex-1 border border-[#b5b5b5] bg-white" />
          </div>
          <ScrollButton label="Desplazar hacia abajo" path="M1 2h6L4 6z" />
        </div>
      </main>
      <SheetTabs />
      <StatusBar />
      <Taskbar />
    </div>
  );
}

export default App;
